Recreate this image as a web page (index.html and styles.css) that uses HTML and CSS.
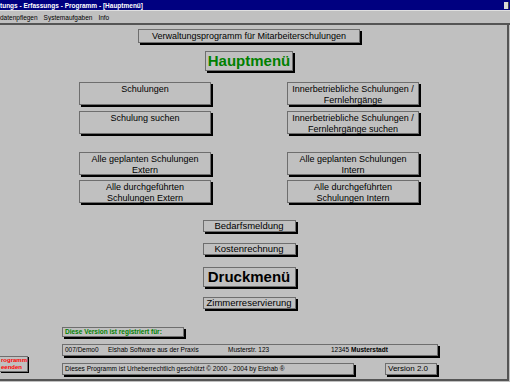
FILE: index.html
```html
<!DOCTYPE html>
<html lang="de">
<head>
  <meta charset="UTF-8">
  <title>Verwaltungs - Erfassungs - Programm - [Hauptmenü]</title>
  <link rel="stylesheet" href="styles.css">
</head>
<body>
  <div class="window">
    <div class="titlebar">
      <span class="title">tungs - Erfassungs - Programm - [Hauptmenü]</span>
      <span class="sysbtn"></span>
    </div>
    <div class="menubar">
      <span>datenpflegen</span>
      <span>Systemaufgaben</span>
      <span>Info</span>
    </div>

    <div class="client">
      <div class="menu">
        <div class="btn heading">Verwaltungsprogramm für Mitarbeiterschulungen</div>
        <div class="btn big green">Hauptmenü</div>

        <div class="grid first-grid">
          <div class="btn wide">Schulungen</div>
          <div class="btn wide">Innerbetriebliche Schulungen /<br>Fernlehrgänge</div>
          <div class="btn wide">Schulung suchen</div>
          <div class="btn wide">Innerbetriebliche Schulungen /<br>Fernlehrgänge suchen</div>
        </div>

        <div class="grid second-grid">
          <div class="btn wide">Alle geplanten Schulungen<br>Extern</div>
          <div class="btn wide">Alle geplanten Schulungen<br>Intern</div>
          <div class="btn wide">Alle durchgeführten<br>Schulungen Extern</div>
          <div class="btn wide">Alle durchgeführten<br>Schulungen Intern</div>
        </div>

        <div class="btn small bedarf">Bedarfsmeldung</div>
        <div class="btn small kosten">Kostenrechnung</div>
        <div class="btn big druck">Druckmenü</div>
        <div class="btn small zimmer">Zimmerreservierung</div>
      </div>

      <div class="footer">
        <div class="btn quit">rogramm<br>eenden</div>
        <div class="info">
          <div class="field registered">Diese Version ist registriert für:</div>
          <div class="field address">
            <span class="col-id">007/Demo0</span>
            <span class="col-firm">Elshab Software aus der Praxis</span>
            <span class="col-street">Musterstr. 123</span>
            <span class="col-zip">12345</span>
            <span class="col-city">Musterstadt</span>
          </div>
          <div class="bottom-row">
            <div class="field copyright">Dieses Programm ist Urheberrechtlich geschützt © 2000 - 2004 by Elshab ®</div>
            <div class="field version">Version 2.0</div>
          </div>
        </div>
      </div>
    </div>
  </div>
</body>
</html>
```

FILE: styles.css
```css
html, body {
  margin: 0;
  padding: 0;
}
body {
  width: 510px;
  height: 382px;
  overflow: hidden;
  background-color: #c0c0c0;
  font-family: "Liberation Sans", Arial, sans-serif;
  color: #000;
}
.window {
  width: 510px;
  height: 382px;
  display: flex;
  flex-direction: column;
}
.titlebar {
  height: 10px;
  background-color: #000080;
  display: flex;
  align-items: center;
  justify-content: space-between;
}
.title {
  color: #fff;
  font-size: 6.5px;
  font-weight: bold;
  white-space: nowrap;
}
.sysbtn {
  width: 4px;
  height: 7px;
  margin-right: 1px;
  background-color: #d8d8d8;
  border-right: 1px solid #404040;
}
.menubar {
  height: 12px;
  border-bottom: 2px solid #555;
  border-top: 1px solid #e0e0e0;
  display: flex;
  align-items: center;
  gap: 6px;
  font-size: 6.5px;
  white-space: nowrap;
}
.client {
  flex: 1;
  display: flex;
  flex-direction: column;
  border-right: 2px solid #555;
  border-bottom: 2px solid #555;
  margin-right: 1px;
  margin-bottom: 1px;
}
.menu {
  width: 498px;
  display: flex;
  flex-direction: column;
  align-items: center;
}
.btn {
  box-sizing: border-box;
  background-color: #c0c0c0;
  border: 1px solid #6e6e6e;
  box-shadow: 2px 2px 0 #000;
  text-align: center;
  font-size: 9px;
  line-height: 11px;
}
.heading {
  width: 222px;
  height: 14px;
  margin-top: 4px;
  line-height: 12px;
}
.big {
  height: 20px;
  width: 88px;
  font-size: 15px;
  font-weight: bold;
  line-height: 18px;
}
.green {
  color: #008000;
  margin-top: 8px;
}
.grid {
  display: grid;
  grid-template-columns: 132px 132px;
  column-gap: 76px;
}
.first-grid {
  margin-top: 11px;
  row-gap: 6px;
}
.second-grid {
  margin-top: 18px;
  row-gap: 5px;
}
.wide {
  height: 23px;
  padding-top: 1px;
}
.small {
  width: 93px;
  height: 12px;
  font-size: 9.5px;
  line-height: 10px;
}
.bedarf {
  margin-top: 17px;
}
.kosten {
  margin-top: 11px;
}
.druck {
  margin-top: 12px;
  width: 93px;
}
.zimmer {
  margin-top: 10px;
}
.footer {
  display: flex;
  margin-top: 18px;
}
.quit {
  width: 28px;
  height: 16px;
  margin-top: 29px;
  color: #ff0000;
  font-size: 6px;
  line-height: 7px;
  font-weight: bold;
  text-align: left;
  padding-left: 1px;
  border-left: none;
  box-shadow: 1px 1px 0 #000;
}
.info {
  margin-left: 34px;
  display: flex;
  flex-direction: column;
  gap: 7px;
}
.field {
  box-sizing: border-box;
  border: 1px solid #6e6e6e;
  box-shadow: 2px 2px 0 #000;
  font-size: 6.5px;
  white-space: nowrap;
  padding-left: 2px;
}
.registered {
  width: 122px;
  height: 10px;
  line-height: 8px;
  color: #008000;
  font-weight: bold;
}
.address {
  width: 376px;
  height: 12px;
  line-height: 10px;
  display: flex;
}
.col-id {
  width: 43px;
}
.col-firm {
  width: 120px;
}
.col-street {
  width: 103px;
}
.col-zip {
  width: 20px;
}
.col-city {
  font-weight: bold;
}
.bottom-row {
  display: flex;
  gap: 31px;
}
.copyright {
  width: 292px;
  height: 12px;
  line-height: 10px;
}
.version {
  width: 52px;
  height: 12px;
  line-height: 10px;
  font-size: 8px;
}
```
